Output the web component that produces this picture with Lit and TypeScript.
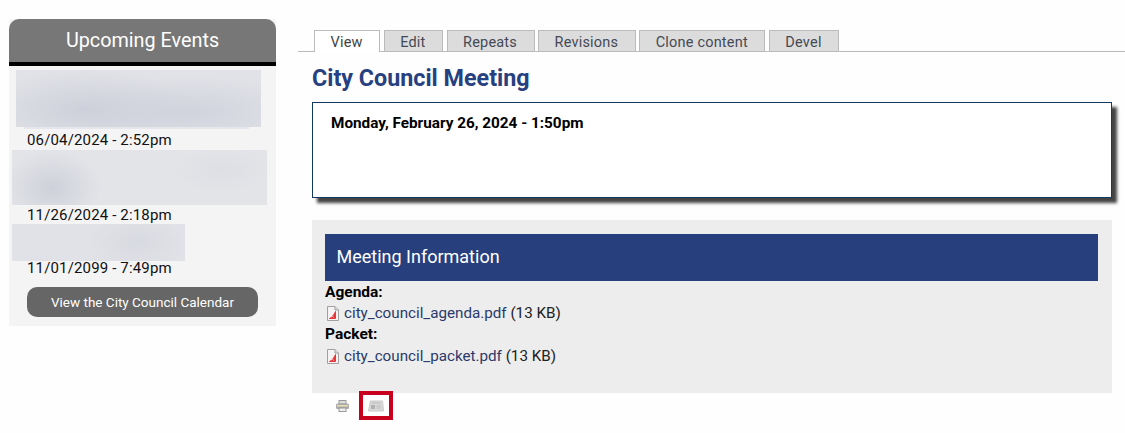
import { LitElement, html, css } from "lit";
import { customElement } from "lit/decorators.js";

const pdf = html`<svg class="pdf" width="12" height="15" viewBox="0 0 12 15">
  <path d="M.5.5H8L11.5 4V14.5H.5Z" fill="#f4f2f2" stroke="#a0a0a0"/>
  <path d="M8 .5V4H11.5" fill="#ddd" stroke="#a0a0a0"/>
  <path d="M2.500 12.500C5 11.500 7 9 8.500 5.500V12.500Z" fill="#e8353a" stroke="#e8353a"/>
  <path d="M5.500 10.500L7 11.500" stroke="#f6c8c8"/>
</svg>`;

@customElement("app-root")
export class AppRoot extends LitElement {
  static styles = css`
    :host { display: block; width: 1125px; height: 433px; overflow: hidden; background: #fefefe; font-family: Roboto, sans-serif; color: #111; }
    .page { display: flex; align-items: flex-start; gap: 22px; padding: 19px 0 0 9px; }
    .side { width: 267px; flex: none; background: #f4f4f5; }
    .side h2 { margin: 0; height: 43px; line-height: 43px; text-align: center; background: #777; color: #fff; font-size: 19.800px; font-weight: 400; border-radius: 10px 10px 0 0; border-bottom: 4px solid #000; }
    .events { display: flex; flex-direction: column; padding: 4px 0 9px; }
    .blur { margin-left: 3px; }
    .b1 { margin-left: 7px; width: 245px; height: 57px; background: radial-gradient(ellipse 110px 40px at 70px 40px, #cdd0da, transparent), radial-gradient(ellipse 120px 36px at 175px 42px, #d0d3dd, transparent), #e1e2e7; }
    .strip { margin-left: 15px; width: 225px; height: 2px; background: #e6e6ec; }
    .b2 { width: 255px; height: 55px; background: radial-gradient(ellipse 50px 38px at 40px 38px, #ced1da, transparent), radial-gradient(ellipse 50px 24px at 210px 20px, #dddfe4, transparent), #e3e4e8; }
    .b3 { width: 173px; height: 37px; background: radial-gradient(ellipse 50px 30px at 125px 18px, #d8dae1, transparent), #e1e2e7; }
    .date { margin-left: 18px; font-size: 15px; line-height: 19px; letter-spacing: 0.150px; height: 19px; }
    .d1 { margin-top: 2px; }
    .d2 { margin-top: 1px; margin-bottom: -1px; }
    .d3 { margin-top: -2px; }
    .btn { margin: 9px 18px 0; height: 30px; line-height: 30px; border-radius: 10px; background: #666; color: #fff; text-align: center; font-size: 13.500px; }
    .main { flex: 1; min-width: 0; padding-top: 11px; }
    .tabs { display: flex; gap: 3.500px; padding-left: 16px; border-bottom: 1px solid #bbb; height: 21px; }
    .tab { height: 18px; line-height: 20px; padding: 2px 16.500px 0 15.500px; background: #dcdcdc; border: 1px solid #bbb; border-bottom: 0; color: #444a55; font-size: 14.500px; letter-spacing: 0.200px; }
    .tab.on { background: #fff; height: 19px; margin-bottom: -1px; color: #444; }
    h1 { margin: 11px 0 0 14px; font-size: 23.300px; line-height: 30px; font-weight: 700; color: #274080; }
    .box { margin: 9px 13px 0 14px; height: 72px; background: #fff; border: 1px solid #123a5f; box-shadow: 5px 5px 3px #444; padding: 11px 18px; box-sizing: content-box; }
    .box b { font-size: 15.300px; line-height: 19px; color: #000; display: block; }
    .info { margin: 22px 13px 0 14px; height: 173px; background: #ededed; padding: 14px 14px 0 13px; box-sizing: border-box; }
    .bar { height: 47px; line-height: 46px; background: #27407d; color: #fff; font-size: 18px; padding-left: 11.500px; }
    .lab { font-weight: 700; font-size: 15.500px; line-height: 21px; color: #000; margin-top: 1px; }
    .file { display: flex; align-items: center; gap: 5px; font-size: 15.200px; line-height: 22px; height: 21px; padding-left: 2px; color: #222; }
    .file.first { margin-top: -1px; }
    .file a { color: #2b3a6b; text-decoration: none; }
    .pdf { flex: none; margin-top: 2px; }
    .tools { display: flex; align-items: center; gap: 10px; margin: -2px 0 0 38px; }
    .tools > svg { margin-top: 1px; }
    .hl { width: 26px; height: 21px; border: 4px solid #c8001e; display: flex; align-items: center; justify-content: center; box-sizing: content-box; }
  `;

  render() {
    return html`<div class="page">
      <aside class="side">
        <h2>Upcoming Events</h2>
        <div class="events">
          <div class="blur b1"></div>
          <div class="strip"></div>
          <div class="date d1">06/04/2024 - 2:52pm</div>
          <div class="blur b2"></div>
          <div class="date d2">11/26/2024 - 2:18pm</div>
          <div class="blur b3"></div>
          <div class="date d3">11/01/2099 - 7:49pm</div>
          <div class="btn">View the City Council Calendar</div>
        </div>
      </aside>
      <main class="main">
        <nav class="tabs">
          <div class="tab on">View</div><div class="tab">Edit</div><div class="tab">Repeats</div><div class="tab">Revisions</div><div class="tab">Clone content</div><div class="tab">Devel</div>
        </nav>
        <h1>City Council Meeting</h1>
        <section class="box"><b>Monday, February 26, 2024 - 1:50pm</b></section>
        <section class="info">
          <div class="bar">Meeting Information</div>
          <div class="lab">Agenda:</div>
          <div class="file first">${pdf}<span><a>city_council_agenda.pdf</a> (13 KB)</span></div>
          <div class="lab">Packet:</div>
          <div class="file">${pdf}<span><a>city_council_packet.pdf</a> (13 KB)</span></div>
        </section>
        <div class="tools">
          <svg width="13" height="12" viewBox="0 0 13 12"><rect x="3" y=".5" width="7" height="3.500" fill="#ddd" stroke="#999"/><rect x="0" y="3.500" width="13" height="5.500" rx="1.500" fill="#aaa"/><rect x="1" y="5" width="11" height="1.500" fill="#eadfae"/><rect x="3" y="8" width="7" height="3.500" fill="#eee" stroke="#999"/></svg>
          <div class="hl"><svg width="16" height="12" viewBox="0 0 16 12"><path d="M2.500 1H14.500L15.500 11H.5Z" fill="#d9d9d9" stroke="#cacaca"/><rect x="3" y="5" width="4" height="4" fill="#b0b0b0"/><path d="M3.500 3H12.500M8.500 6H13M8.500 8H13" stroke="#bcbcbc"/></svg></div>
        </div>
      </main>
    </div>`;
  }
}
